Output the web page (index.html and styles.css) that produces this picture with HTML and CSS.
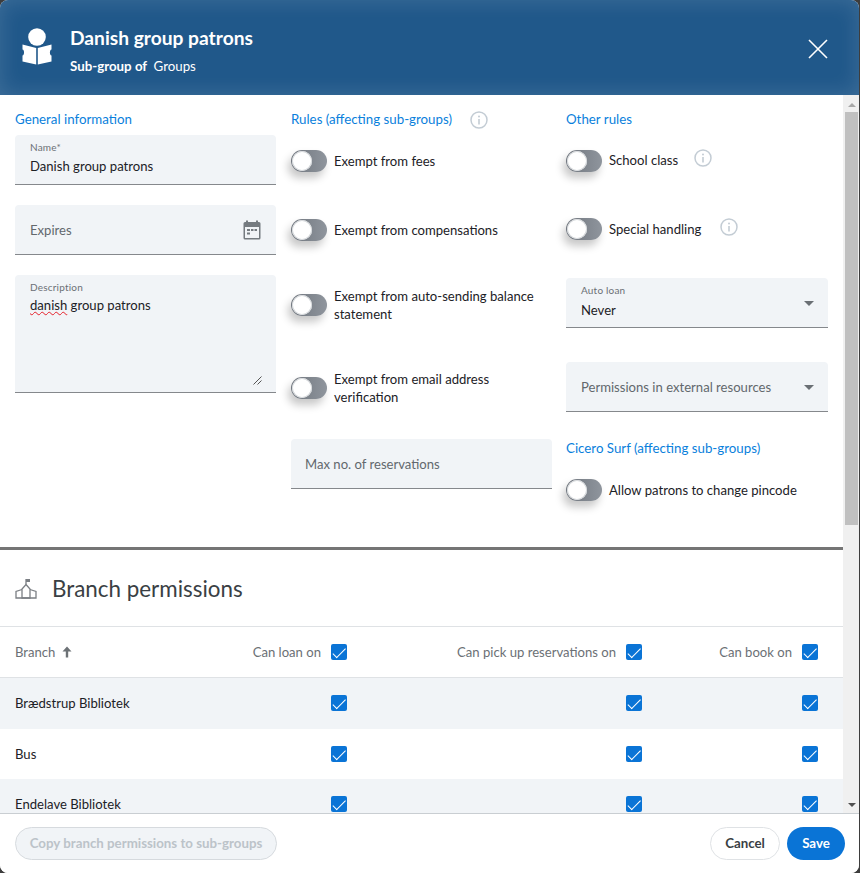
FILE: index.html
```html
<!DOCTYPE html>
<html lang="en">
<head>
  <meta charset="UTF-8">
  <title>Danish group patrons</title>
  <link rel="stylesheet" href="styles.css">
</head>
<body>

<div class="dialog">

  <header class="dialog-head">
    <svg class="head-icon" width="30" height="37" viewBox="0 0 30 37">
      <circle cx="15" cy="9" r="8.8" fill="#fff"/>
      <path d="M0.5 16.5 L14.2 20 V36.5 L0.5 33.5 V27.5 C2.6 27.5 2.6 21.5 0.5 21.5 Z" fill="#fff"/>
      <path d="M29.5 16.5 L15.8 20 V36.5 L29.5 33.5 V27.5 C27.4 27.5 27.4 21.5 29.5 21.5 Z" fill="#fff"/>
    </svg>
    <div class="head-text">
      <h1>Danish group patrons</h1>
      <p><b>Sub-group of</b> Groups</p>
    </div>
    <svg class="head-close" width="20" height="20" viewBox="0 0 20 20">
      <path d="M1 1 L19 19 M19 1 L1 19" stroke="#fff" stroke-width="1.6" fill="none"/>
    </svg>
  </header>

  <div class="dialog-body">
    <div class="scroll-area">

      <section class="form-grid">
        <div class="col">
          <h3 class="blue-title">General information</h3>
          <div class="field has-value">
            <label>Name*</label>
            <span>Danish group patrons</span>
          </div>
          <div class="field gap-20">
            <span class="placeholder">Expires</span>
            <svg class="field-icon" width="18" height="20" viewBox="0 0 18 20">
              <path d="M4 0.5 V3 M14 0.5 V3" stroke="#757b80" stroke-width="2"/>
              <path fill-rule="evenodd" d="M2 2 H16 A1.5 1.5 0 0 1 17.5 3.5 V18 A1.5 1.5 0 0 1 16 19.5 H2 A1.5 1.5 0 0 1 0.5 18 V3.5 A1.5 1.5 0 0 1 2 2 Z M2 7 V18 H16 V7 Z" fill="#757b80"/>
              <path d="M4 9 H7 V11 H4 Z M8 9 H10.5 V11 H8 Z M11.5 9 H14 V11 H11.5 Z M4 12.5 H7 V14.5 H4 Z" fill="#757b80"/>
            </svg>
          </div>
          <div class="field textarea gap-20">
            <label>Description</label>
            <span><span class="misspelled">danish</span> group patrons</span>
            <svg class="resize" width="9" height="9" viewBox="0 0 9 9">
              <path d="M0.5 8.5 L8.5 0.5 M4.5 8.5 L8.5 4.5" stroke="#555" stroke-width="1"/>
            </svg>
          </div>
        </div>

        <div class="col">
          <h3 class="blue-title">Rules (affecting sub-groups)
            <svg class="info info-title" width="18" height="18" viewBox="0 0 18 18">
              <circle cx="9" cy="9" r="8" fill="none" stroke="#c3ccd4" stroke-width="1.5"/>
              <circle cx="9" cy="5.4" r="1" fill="#c3ccd4"/>
              <path d="M9 8 V13.4" stroke="#c3ccd4" stroke-width="1.6"/>
            </svg>
          </h3>
          <div class="switch-row rule-1"><i class="switch"></i><span>Exempt from fees</span></div>
          <div class="switch-row rule-2"><i class="switch"></i><span>Exempt from compensations</span></div>
          <div class="switch-row rule-3"><i class="switch"></i><span>Exempt from auto-sending balance statement</span></div>
          <div class="switch-row rule-4"><i class="switch"></i><span>Exempt from email address verification</span></div>
          <div class="field rule-field">
            <span class="placeholder">Max no. of reservations</span>
          </div>
        </div>

        <div class="col col-other">
          <h3 class="blue-title">Other rules</h3>
          <div class="switch-row other-1"><i class="switch"></i><span>School class</span>
            <svg class="info" width="18" height="18" viewBox="0 0 18 18">
              <circle cx="9" cy="9" r="8" fill="none" stroke="#c3ccd4" stroke-width="1.5"/>
              <circle cx="9" cy="5.4" r="1" fill="#c3ccd4"/>
              <path d="M9 8 V13.4" stroke="#c3ccd4" stroke-width="1.6"/>
            </svg>
          </div>
          <div class="switch-row other-2"><i class="switch"></i><span>Special handling</span>
            <svg class="info" width="18" height="18" viewBox="0 0 18 18">
              <circle cx="9" cy="9" r="8" fill="none" stroke="#c3ccd4" stroke-width="1.5"/>
              <circle cx="9" cy="5.4" r="1" fill="#c3ccd4"/>
              <path d="M9 8 V13.4" stroke="#c3ccd4" stroke-width="1.6"/>
            </svg>
          </div>
          <div class="field has-value select auto-loan">
            <label>Auto loan</label>
            <span>Never</span>
            <i class="caret"></i>
          </div>
          <div class="field select perms">
            <span class="placeholder">Permissions in external resources</span>
            <i class="caret"></i>
          </div>
          <h3 class="blue-title surf-title">Cicero Surf (affecting sub-groups)</h3>
          <div class="switch-row surf"><i class="switch"></i><span>Allow patrons to change pincode</span></div>
        </div>
      </section>

      <section class="branches">
        <h2>
          <svg width="22" height="21" viewBox="0 0 22 21" fill="none" stroke="#7b7f84" stroke-width="1.3">
            <path d="M11 6.5 V1" />
            <path d="M11 1 H15 V4 H11 Z" fill="#7b7f84" stroke="none"/>
            <path d="M11 6.5 L15 11 V20 H7 V11 Z"/>
            <path d="M7 11.5 L1 13.5 V20 H7 M15 11.5 L21 13.5 V20 H15 M0.5 20 H21.5"/>
          </svg>
          Branch permissions
        </h2>

        <div class="row head">
          <div class="cell-name">Branch
            <svg width="10" height="12" viewBox="0 0 10 12"><path d="M5 0.5 L9.5 5.5 H6.2 V11.5 H3.8 V5.5 H0.5 Z" fill="#6d7276"/></svg>
          </div>
          <div class="cell">Can loan on <i class="check"></i></div>
          <div class="cell">Can pick up reservations on <i class="check"></i></div>
          <div class="cell">Can book on <i class="check"></i></div>
        </div>
        <div class="row shaded">
          <div class="cell-name">Brædstrup Bibliotek</div>
          <div class="cell"><i class="check"></i></div>
          <div class="cell"><i class="check"></i></div>
          <div class="cell"><i class="check"></i></div>
        </div>
        <div class="row">
          <div class="cell-name">Bus</div>
          <div class="cell"><i class="check"></i></div>
          <div class="cell"><i class="check"></i></div>
          <div class="cell"><i class="check"></i></div>
        </div>
        <div class="row shaded">
          <div class="cell-name">Endelave Bibliotek</div>
          <div class="cell"><i class="check"></i></div>
          <div class="cell"><i class="check"></i></div>
          <div class="cell"><i class="check"></i></div>
        </div>
      </section>

    </div>

    <div class="scrollbar">
      <i class="arrow-up"></i>
      <div class="thumb"></div>
      <i class="arrow-down"></i>
    </div>
  </div>

  <footer class="dialog-foot">
    <button class="btn btn-disabled">Copy branch permissions to sub-groups</button>
    <button class="btn btn-cancel">Cancel</button>
    <button class="btn btn-save">Save</button>
  </footer>

</div>

</body>
</html>
```

FILE: styles.css
```css
* {
  box-sizing: border-box;
}
body {
  margin: 0;
  background: #3d3d3d;
  font-family: "Lato", "Open Sans", sans-serif;
  font-size: 13.1px;
  color: #1c2126;
}
.dialog {
  display: flex;
  flex-direction: column;
  width: 859px;
  height: 873px;
  background: white;
  border-radius: 8px;
  overflow: hidden;
}

/* header */
.dialog-head {
  display: flex;
  align-items: flex-start;
  flex: 0 0 95px;
  padding: 28px 31px 0 22px;
  background: #20588a;
  box-shadow: inset 0 0 22px rgba(255,255,255,0.14);
  color: white;
}
.head-icon {
  flex: none;
}
.head-text {
  margin-left: 18px;
  flex: 1;
}
.head-text h1 {
  margin: 0;
  font-size: 19.2px;
  line-height: 20px;
  font-weight: 700;
}
.head-text p {
  margin: 10px 0 0 0;
  font-size: 13.3px;
  line-height: 16px;
}
.head-text b {
  margin-right: 3px;
}
.head-close {
  margin-top: 11px;
}

/* body */
.dialog-body {
  display: flex;
  flex: 0 0 718px;
  min-height: 0;
}
.scroll-area {
  width: 843px;
  overflow: hidden;
}
.scrollbar {
  position: relative;
  width: 16px;
  background: #f0f0f0;
}
.thumb {
  position: absolute;
  top: 17px;
  left: 2px;
  width: 13px;
  height: 413px;
  background: #c0c0c0;
}
.arrow-up, .arrow-down {
  position: absolute;
  left: 5px;
  width: 0;
  height: 0;
  border-left: 4px solid transparent;
  border-right: 4px solid transparent;
}
.arrow-up {
  top: 8px;
  border-bottom: 4px solid #a8a8a8;
}
.arrow-down {
  bottom: 6px;
  border-top: 4px solid #505050;
}

/* form */
.form-grid {
  display: grid;
  grid-template-columns: 261px 261px 261px;
  column-gap: 15px;
  height: 455px;
  padding: 15px 15px 0 15px;
  border-bottom: 3px solid #757575;
}
.col {
  display: flex;
  flex-direction: column;
  align-items: stretch;
}
.col-other {
  margin-left: -1px;
}
.blue-title {
  display: flex;
  align-items: center;
  margin: 0 0 7px 0;
  height: 18px;
  font-size: 13.3px;
  line-height: 18px;
  font-weight: 400;
  color: #0a7fdc;
}
.info {
  flex: none;
  margin-left: 16px;
}
.info-title {
  margin-left: 18px;
  margin-top: 2px;
}
.field {
  position: relative;
  height: 50px;
  padding: 0 15px;
  background: #f1f4f7;
  border-bottom: 1px solid #85888c;
  border-radius: 4px 4px 0 0;
  display: flex;
  align-items: center;
}
.field.has-value, .field.textarea {
  display: block;
  padding-top: 6px;
}
.field label {
  display: block;
  font-size: 10px;
  line-height: 12px;
  letter-spacing: 0.2px;
  color: #6b7075;
}
.field.has-value span {
  display: block;
  margin-top: 4px;
  line-height: 18px;
}
.field.textarea {
  height: 118px;
}
.field.textarea > span {
  display: block;
  line-height: 18px;
  margin-top: 3px;
}
.misspelled {
  text-decoration: underline wavy #e5202a 1px;
}
.gap-20 {
  margin-top: 20px;
}
.placeholder {
  color: #62686d;
}
.field-icon {
  position: absolute;
  right: 15px;
  top: 15px;
}
.resize {
  position: absolute;
  right: 14px;
  bottom: 7px;
}
.caret {
  position: absolute;
  right: 14px;
  top: 23px;
  width: 0;
  height: 0;
  border-left: 5px solid transparent;
  border-right: 5px solid transparent;
  border-top: 5px solid #6a6f74;
}

/* switches */
.switch-row {
  display: flex;
  align-items: center;
  line-height: 18px;
}
.switch-row span {
  margin-left: 7px;
}
.switch {
  position: relative;
  flex: none;
  width: 36px;
  height: 22px;
  border-radius: 11px;
  background: linear-gradient(to right, #70767e, #8f959d);
  box-shadow: -3px 6px 8px rgba(0,0,0,0.22);
}
.switch::after {
  content: "";
  position: absolute;
  top: 1px;
  left: 1px;
  width: 20px;
  height: 20px;
  border-radius: 50%;
  background: white;
  box-shadow: inset 0 0 0 1px #d5d8db;
}
.rule-1 { margin-top: 15px; height: 22px; }
.rule-2 { margin-top: 47px; height: 22px; }
.rule-3 { margin-top: 46px; height: 36px; }
.rule-4 { margin-top: 47px; height: 36px; }
.rule-field { margin-top: 33px; padding: 0 14px; }
.other-1 { margin-top: 15px; height: 22px; }
.other-1 span { margin-top: -2px; }
.other-1 .info { margin-top: -7px; }
.other-2 { margin-top: 46px; height: 22px; }
.other-2 .info { margin-top: -5px; margin-left: 19px; }
.auto-loan { margin-top: 38px; }
.auto-loan span { margin-top: 5px !important; }
.perms { margin-top: 34px; }
.surf-title { margin: 27px 0 0 0; }
.surf { margin-top: 22px; height: 22px; }

/* branch table */
.branches h2 {
  display: flex;
  align-items: center;
  gap: 15px;
  height: 77px;
  margin: 0;
  padding: 0 15px;
  font-size: 22.4px;
  font-weight: 400;
  color: #3a3f44;
  border-bottom: 1px solid #dfe2e5;
}
.row {
  display: grid;
  grid-template-columns: 1fr 150px 295px 176px;
  align-items: center;
  height: 50.5px;
  padding: 0 25px 0 15px;
}
.row.head {
  height: 51px;
  color: #6b7075;
  border-bottom: 1px solid #dfe2e5;
}
.row.shaded {
  background: #f1f4f7;
}
.cell-name {
  display: flex;
  align-items: center;
  gap: 7px;
}
.cell {
  display: flex;
  align-items: center;
  justify-content: flex-end;
  gap: 10px;
}
.check {
  position: relative;
  flex: none;
  width: 16px;
  height: 16px;
  border-radius: 2px;
  background: #0a74d6;
}
.check::after {
  content: "";
  position: absolute;
  left: 5.3px;
  top: 0.8px;
  width: 5.4px;
  height: 12.4px;
  border: solid white;
  border-width: 0 1.5px 1.5px 0;
  transform: rotate(45deg);
}

/* footer */
.dialog-foot {
  display: flex;
  align-items: center;
  gap: 7px;
  flex: 1;
  padding: 0 14px 0 15px;
  border-top: 1px solid #c9ced2;
  background: white;
}
.btn {
  height: 33px;
  padding: 0 0 2px 0;
  border-radius: 17px;
  font-family: inherit;
  font-size: 13.3px;
  font-weight: 700;
  border: 1px solid transparent;
}
.btn-disabled {
  width: 262px;
  margin-right: auto;
  background: #f1f4f7;
  border-color: #d6dade;
  color: #bcc3c9;
}
.btn-cancel {
  width: 70px;
  background: white;
  border-color: #dfe2e5;
  color: #3a3f44;
}
.btn-save {
  width: 58px;
  background: #0a74d6;
  color: white;
}
```
